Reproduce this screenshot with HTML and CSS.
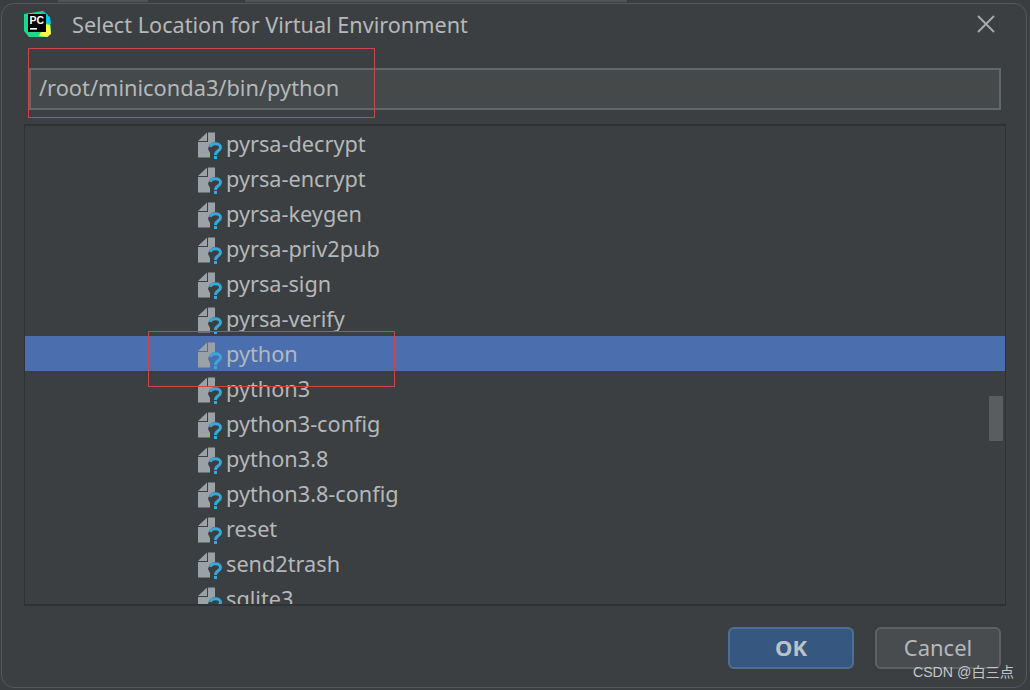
FILE: index.html
```html
<!DOCTYPE html>
<html>
<head>
    <meta charset="utf-8">
    <title>Select Location for Virtual Environment</title>
    <link rel="stylesheet" href="styles.css">
</head>
<body>

<svg class="defs" width="0" height="0">
    <symbol id="file-unknown" viewBox="0 0 26 30">
        <path d="M0 12 L9 3.5 V12 Z" fill="#9aa1a7"/>
        <path d="M10 3.5 H17 V13 Q11 14 10 20 L12 24 V28.5 H0 V13 H10 Z" fill="#9aa1a7"/>
        <path d="M12.5 18 C13 13.5 22.5 13.5 22.5 18.5 C22.5 22 17.5 21.5 17.5 26" fill="none" stroke="#38a8d8" stroke-width="3"/>
        <rect x="16" y="27" width="3" height="3" fill="#38a8d8"/>
    </symbol>
</svg>

<div class="backdrop">
    <span class="scrap scrap-a"></span>
    <span class="scrap scrap-b"></span>
</div>

<div class="dialog">
    <div class="title-bar">
        <svg class="logo" viewBox="0 0 28 28">
            <path d="M1 4 L20 1 L25 5 L23 9 L27 10 L28 22 L25 27 L6 27 L1 21 Z" fill="#21d789"/>
            <path d="M18 1 L27 7 L28 14 L20 12 Z" fill="#07c3f2"/>
            <path d="M22 14 L27 15 L28 24 L24 27 L16 26 Z" fill="#fcf84a"/>
            <rect x="5" y="4" width="18" height="18" fill="#000"/>
            <rect x="7" y="18" width="7" height="1.6" fill="#fff"/>
            <text x="6.5" y="13.5" class="logo-text">PC</text>
        </svg>
        <span class="title">Select Location for Virtual Environment</span>
        <svg class="close" viewBox="0 0 18 18">
            <path d="M1 1 L17 17 M17 1 L1 17" stroke="#a9adaf" stroke-width="1.8" fill="none"/>
        </svg>
    </div>

    <div class="path-input">/root/miniconda3/bin/python</div>

    <div class="tree">
        <div class="row"><svg class="file"><use href="#file-unknown"/></svg>pyrsa-decrypt</div>
        <div class="row"><svg class="file"><use href="#file-unknown"/></svg>pyrsa-encrypt</div>
        <div class="row"><svg class="file"><use href="#file-unknown"/></svg>pyrsa-keygen</div>
        <div class="row"><svg class="file"><use href="#file-unknown"/></svg>pyrsa-priv2pub</div>
        <div class="row"><svg class="file"><use href="#file-unknown"/></svg>pyrsa-sign</div>
        <div class="row"><svg class="file"><use href="#file-unknown"/></svg>pyrsa-verify</div>
        <div class="row selected"><svg class="file"><use href="#file-unknown"/></svg>python</div>
        <div class="row"><svg class="file"><use href="#file-unknown"/></svg>python3</div>
        <div class="row"><svg class="file"><use href="#file-unknown"/></svg>python3-config</div>
        <div class="row"><svg class="file"><use href="#file-unknown"/></svg>python3.8</div>
        <div class="row"><svg class="file"><use href="#file-unknown"/></svg>python3.8-config</div>
        <div class="row"><svg class="file"><use href="#file-unknown"/></svg>reset</div>
        <div class="row"><svg class="file"><use href="#file-unknown"/></svg>send2trash</div>
        <div class="row"><svg class="file"><use href="#file-unknown"/></svg>sqlite3</div>
        <div class="scrollbar"></div>
    </div>

    <div class="buttons">
        <button class="btn btn-ok">OK</button>
        <button class="btn">Cancel</button>
    </div>
</div>

<!-- annotations drawn on top of the screenshot -->
<div class="mark mark-input"></div>
<div class="mark mark-row"></div>
<div class="watermark">CSDN @白三点</div>

</body>
</html>
```

FILE: styles.css
```css
html, body {
    margin: 0;
    height: 100%;
}
body {
    position: relative;
    width: 1030px;
    height: 690px;
    overflow: hidden;
    box-sizing: border-box;
    padding: 3px 3px 2px 1px;
    display: flex;
    background-color: #3b3e40;
    font-family: "Noto Sans", "Open Sans", sans-serif;
    color: #b4b8ba;
}
.defs {
    position: absolute;
}
.backdrop {
    position: absolute;
    top: 0;
    left: 0;
    width: 100%;
    height: 3px;
}
.scrap {
    position: absolute;
    top: 0;
    height: 2px;
    background-color: #505456;
}
.scrap-a {
    left: 58px;
    width: 90px;
}
.scrap-b {
    left: 245px;
    width: 382px;
}
.dialog {
    flex: 1;
    display: flex;
    flex-direction: column;
    box-sizing: border-box;
    border: 1px solid #54585a;
    border-radius: 13px;
    background-color: #3c3f41;
}
.title-bar {
    height: 64px;
    flex: none;
    display: flex;
    align-items: center;
    padding: 0 31px 24px 21px;
    box-sizing: border-box;
}
.logo {
    width: 28px;
    height: 28px;
    flex: none;
}
.logo-text {
    font-family: "Liberation Sans", sans-serif;
    font-size: 10.5px;
    font-weight: 700;
    fill: #fff;
}
.title {
    margin-left: 21px;
    font-size: 21.65px;
    flex: 1;
}
.close {
    width: 18px;
    height: 18px;
    flex: none;
}
.path-input {
    height: 42px;
    flex: none;
    box-sizing: border-box;
    margin: 0 25px 14px 27px;
    padding-left: 8px;
    line-height: 36px;
    font-size: 21.8px;
    border: 2px solid #62676a;
    background-color: #45494a;
}
.tree {
    position: relative;
    height: 482px;
    flex: none;
    box-sizing: border-box;
    margin: 0 20px 0 22px;
    overflow: hidden;
    border: 1px solid #2f3234;
    border-top-width: 2px;
    border-bottom-width: 2px;
}
.row {
    height: 35px;
    display: flex;
    align-items: center;
    padding-left: 173px;
    font-size: 21.7px;
}
.row.selected {
    background-color: #4b6eaf;
}
.file {
    width: 26px;
    height: 30px;
    flex: none;
    margin-right: 2px;
}
.scrollbar {
    position: absolute;
    top: 270px;
    right: 2px;
    width: 14px;
    height: 45px;
    background-color: #5a5d5f;
}
.buttons {
    display: flex;
    justify-content: flex-end;
    gap: 21px;
    padding: 21px 25px 0 0;
}
.btn {
    width: 126px;
    height: 42px;
    box-sizing: border-box;
    font-family: inherit;
    font-size: 22px;
    color: #b4b8ba;
    padding: 0 0 2px;
    border: 2px solid #5e6163;
    border-radius: 6px;
    background-color: #494c4e;
}
.btn-ok {
    font-weight: 700;
    color: #bcc3c8;
    border-color: #4c6f97;
    background-color: #365880;
}
.mark {
    position: absolute;
    border: 1px solid #d0454b;
}
.mark-input {
    left: 28px;
    top: 48px;
    width: 345px;
    height: 68px;
}
.mark-row {
    left: 148px;
    top: 331px;
    width: 245px;
    height: 54px;
}
.watermark {
    position: absolute;
    right: 16px;
    top: 661px;
    font-family: "Liberation Sans", "Noto Sans CJK SC", sans-serif;
    font-size: 14.2px;
    color: #c3c6c8;
}
```
